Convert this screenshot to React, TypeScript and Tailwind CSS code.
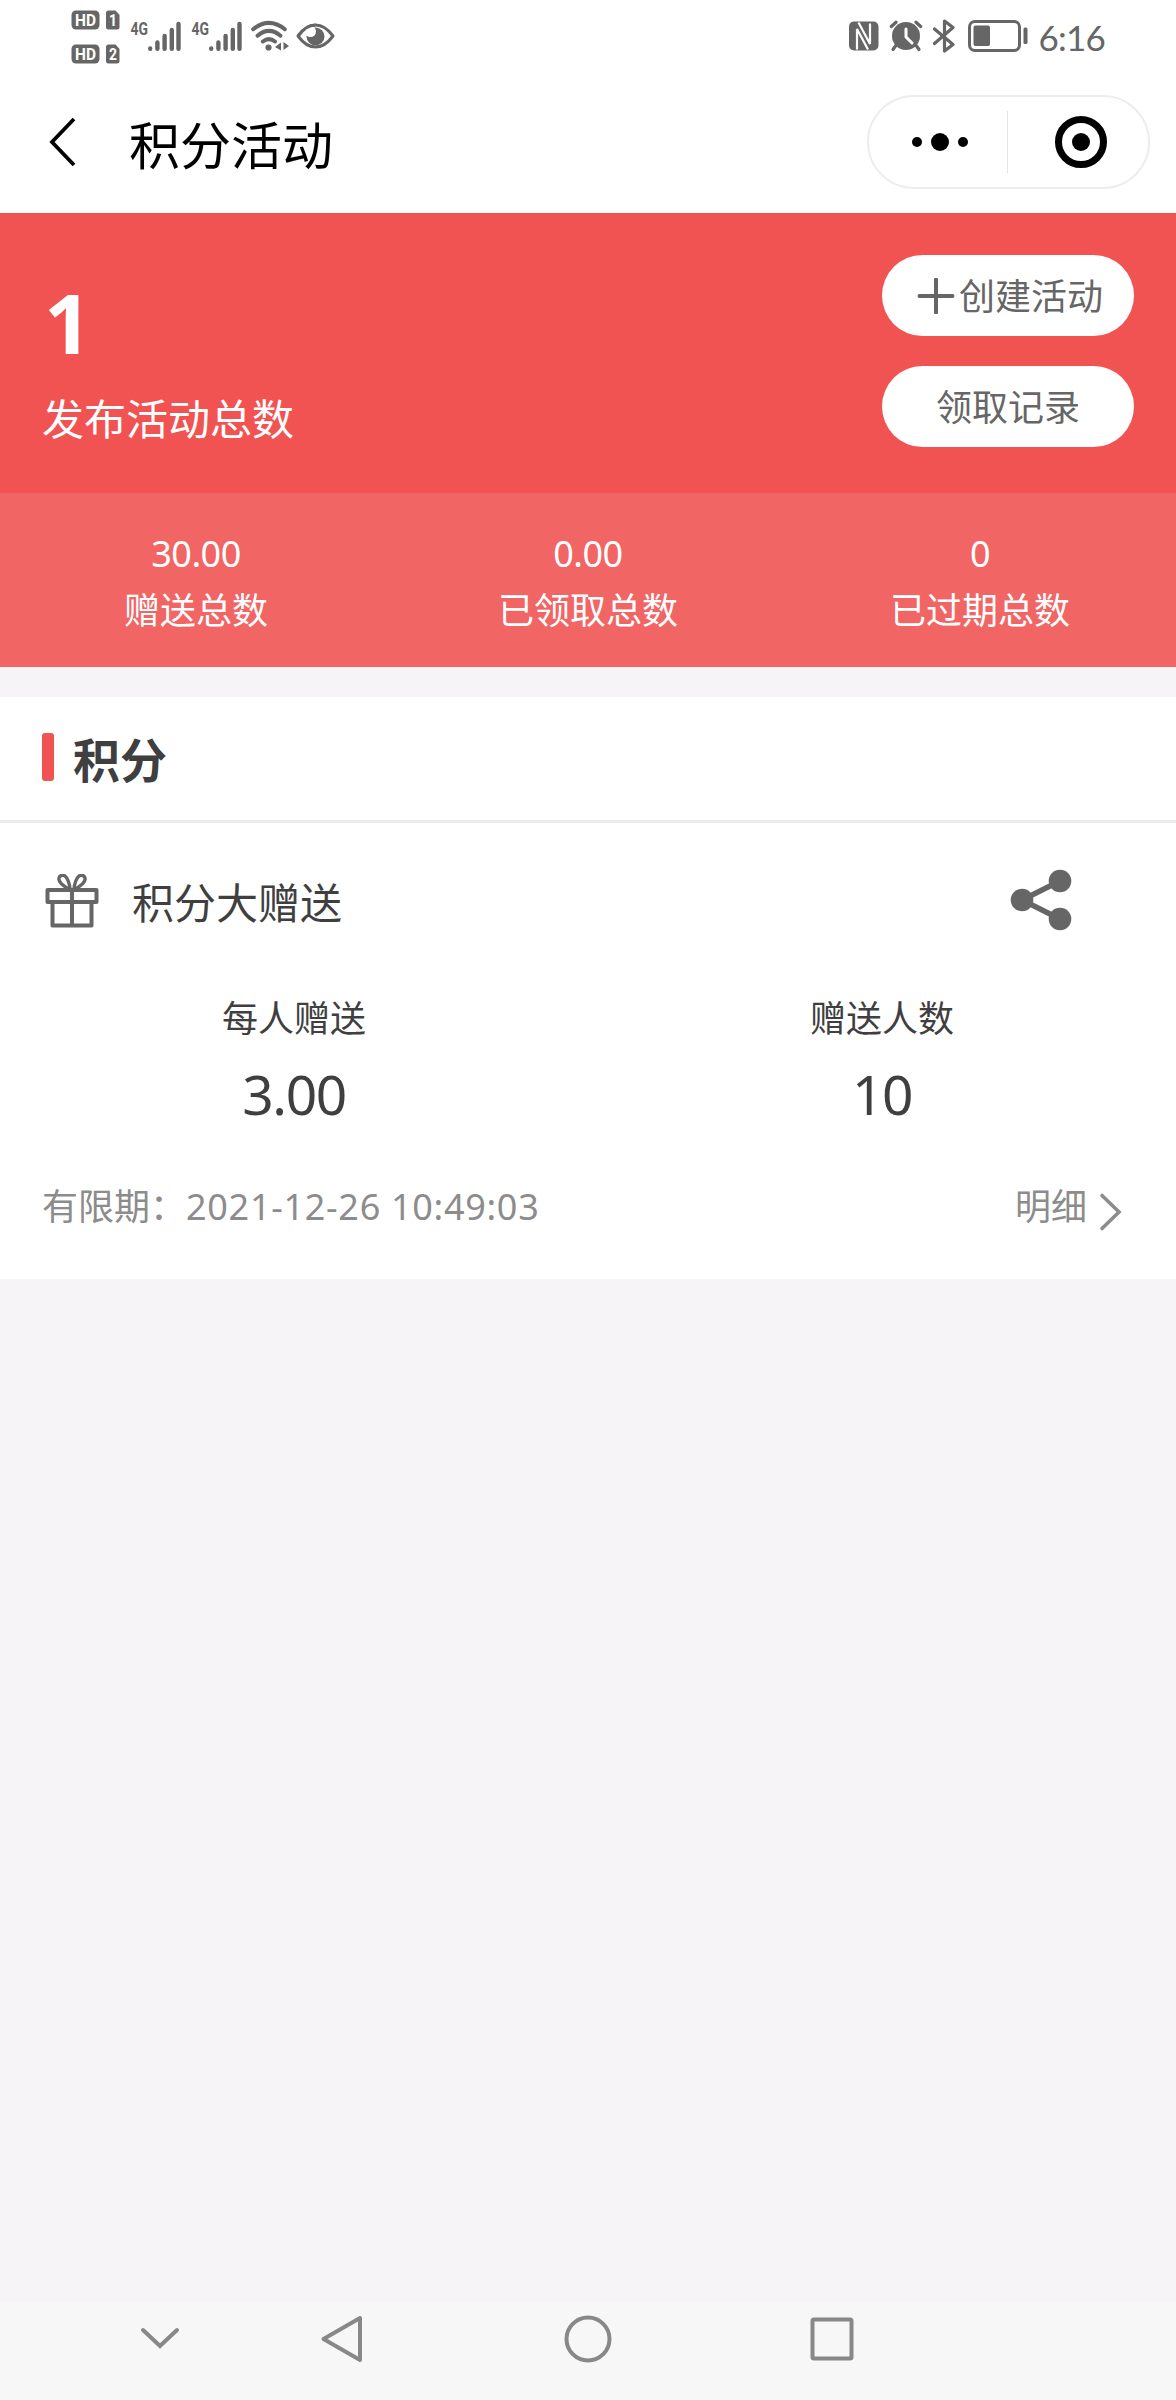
import React from 'react';

const totals = [
  { label: '赠送总数', value: '30.00' },
  { label: '已领取总数', value: '0.00' },
  { label: '已过期总数', value: '0' },
];

const details = [
  { label: '每人赠送', value: '3.00' },
  { label: '赠送人数', value: '10' },
];

// HD badge with the SIM slot number next to it
function HdBadge({ slot }: { slot: number }) {
  return (
    <svg width="49" height="20" viewBox="0 0 49 20" className="block">
      <rect x="0.5" y="0.5" width="28" height="19" rx="4.5" fill="#666" />
      <path d="M38 0.5h6.5l4 4.5v12a2.5 2.5 0 0 1-2.5 2.5h-8.5a2.5 2.5 0 0 1-2.5-2.5V3a2.5 2.5 0 0 1 2.5-2.5z" fill="#666" />
      <text x="4" y="16" textLength="21" lengthAdjust="spacingAndGlyphs" fontSize="17" fontWeight="700" fill="#fff" fontFamily="Roboto, sans-serif">HD</text>
      <text x="38" y="16" textLength="8" lengthAdjust="spacingAndGlyphs" fontSize="16" fontWeight="700" fill="#fff" fontFamily="Roboto, sans-serif">{slot}</text>
    </svg>
  );
}

function Signal() {
  return (
    <svg width="50" height="37" viewBox="0 -5 50 37" className="block overflow-visible">
      <text x="-0.5" y="15" textLength="17.5" lengthAdjust="spacingAndGlyphs" fontSize="19" fontWeight="700" fill="#666" fontFamily="Roboto, sans-serif">4G</text>
      <g stroke="#666" strokeWidth="4.4" strokeLinecap="round">
        <path d="M19.2 28.5v0.3M26.4 22.5v6.3M33.6 16v12.8M40.8 10v18.8M47.5 4v24.8" />
      </g>
    </svg>
  );
}

function WifiIcon() {
  return (
    <svg width="38" height="32" viewBox="0 0 38 32" fill="none" stroke="#666" strokeWidth="4" strokeLinecap="round" className="block">
      <path d="M2.2 9.2Q18 -3.4 33.8 9.2" />
      <path d="M6.5 15.8Q18 6 29.5 15.8" />
      <path d="M11.8 21.5Q18 16.7 24 21.5" />
      <circle cx="17.5" cy="27.5" r="3.1" fill="#666" stroke="none" />
      <path d="M30 22.5v8l-6-3.5zM32.5 22v8l5.5-4z" fill="#666" stroke="none" />
    </svg>
  );
}

function EyeIcon() {
  return (
    <svg width="39" height="26" viewBox="0 0 39 26" fill="none" className="block">
      <path d="M2 13Q10 2 19.5 2T37 13Q29 24 19.5 24T2 13z" stroke="#666" strokeWidth="3" strokeLinejoin="round" />
      <circle cx="19.5" cy="13.5" r="9" fill="#666" />
      <circle cx="14.5" cy="8.5" r="5.5" fill="#fff" />
      <path d="M2 13Q10 2 19.5 2" stroke="#666" strokeWidth="3" />
    </svg>
  );
}

function NfcIcon() {
  return (
    <svg width="30" height="30" viewBox="0 0 30 30" className="block">
      <rect x="0" y="0.5" width="29.5" height="29" rx="5" fill="#666" />
      <path d="M8 28.5V8L19 28.5M9.5 1.5L21 23V2.5" fill="none" stroke="#fff" strokeWidth="2.2" />
    </svg>
  );
}

function AlarmIcon() {
  return (
    <svg width="34" height="32" viewBox="0 0 34 32" fill="none" strokeLinecap="round" className="block">
      <circle cx="17" cy="16" r="14" fill="#666" />
      <path d="M2.3 6.5L7 2.2M31.7 6.5L27 2.2" stroke="#666" strokeWidth="3.2" />
      <path d="M6.5 26l-2.5 3.5M27.5 26l2.5 3.5" stroke="#666" strokeWidth="3.2" />
      <path d="M17 9v8l6 6" stroke="#fff" strokeWidth="3" />
    </svg>
  );
}

function BluetoothIcon() {
  return (
    <svg width="24" height="34" viewBox="0 0 24 34" fill="none" stroke="#666" strokeWidth="3.2" strokeLinecap="round" strokeLinejoin="round" className="block">
      <path d="M2.5 10L21 25.5L12.5 32V2L21 8.5L2.5 24.5" />
    </svg>
  );
}

function BatteryIcon() {
  return (
    <svg width="60" height="32" viewBox="0 0 60 32" className="block">
      <rect x="1.5" y="1.5" width="50" height="29" rx="5.5" fill="none" stroke="#666" strokeWidth="3" />
      <rect x="5.5" y="5.5" width="16.5" height="20.5" rx="2" fill="#666" />
      <rect x="55.5" y="7.5" width="4" height="16.5" rx="1.5" fill="#666" />
    </svg>
  );
}

function StatusBar() {
  return (
    <div className="flex h-[72px] items-start justify-between pr-[71px] pl-[71px]">
      <div className="flex">
        <div className="flex flex-col gap-[14px] pt-[10px]">
          <HdBadge slot={1} />
          <HdBadge slot={2} />
        </div>
        <div className="ml-[11px] flex gap-[11px] pt-[15px]">
          <Signal />
          <Signal />
        </div>
        <div className="ml-[9px] pt-5">
          <WifiIcon />
        </div>
        <div className="ml-[7px] pt-[23px]">
          <EyeIcon />
        </div>
      </div>
      <div className="flex h-[72px] items-center">
        <NfcIcon />
        <div className="ml-[10px]">
          <AlarmIcon />
        </div>
        <div className="ml-[9px]">
          <BluetoothIcon />
        </div>
        <div className="ml-[12px]">
          <BatteryIcon />
        </div>
        <span className="ml-[11px] pt-[3px] font-['Lato',sans-serif] text-[35px] leading-none tracking-[-0.8px] text-[#666]">6:16</span>
      </div>
    </div>
  );
}

function TitleBar() {
  return (
    <div className="flex h-[141px] items-start pt-[23px] pr-[26px] pl-[48px]">
      <svg width="30" height="54" viewBox="0 0 30 54" fill="none" className="mt-5 block">
        <path d="M26 4L4 27L26 50" stroke="#000" strokeWidth="3.8" />
      </svg>
      <h1 className="ml-[51px] pt-[20px] text-[51px] leading-[60px] text-black">积分活动</h1>
      <div className="ml-auto flex h-[94px] w-[283px] items-center rounded-full border-2 border-[#ededed]">
        <div className="flex flex-1 items-center justify-center gap-[9px] pl-[3px]">
          <span className="size-[10px] rounded-full bg-black" />
          <span className="size-[18px] rounded-full bg-black" />
          <span className="size-[10px] rounded-full bg-black" />
        </div>
        <div className="h-[62px] w-px bg-[#e4e4e4]" />
        <div className="flex flex-1 items-center justify-center pl-[5px]">
          <div className="flex size-[52px] items-center justify-center rounded-full border-[7px] border-black">
            <span className="size-[18px] rounded-full bg-black" />
          </div>
        </div>
      </div>
    </div>
  );
}

function Summary() {
  return (
    <div>
      <div className="flex h-[280px] justify-between bg-[#f15353] px-[42px] text-white">
        <div className="pt-[61px]">
          <div className="pl-[2px] text-[83px] leading-[96px] font-bold">1</div>
          <div className="mt-[19px] text-[42px] leading-[60px]">发布活动总数</div>
        </div>
        <div className="flex flex-col gap-[30px] pt-[42px] text-[36px] text-[#666]">
          <button className="flex h-[81px] w-[252px] items-center justify-center rounded-full bg-white pl-[3px]">
            <svg width="43" height="36" viewBox="0 0 43 36" className="block">
              <path d="M3.5 18h33M20 1.5v33" stroke="#666" strokeWidth="4" strokeLinecap="round" />
            </svg>
            <span className="pt-[3px]">创建活动</span>
          </button>
          <button className="flex h-[81px] w-[252px] items-center justify-center rounded-full bg-white pt-[3px]">
            领取记录
          </button>
        </div>
      </div>
      <div className="grid h-[174px] grid-cols-3 bg-[#f16564] pt-[32px] text-center text-[36px] leading-[57px] text-white">
        {totals.map(item => (
          <div key={item.label}>
            <div className="tracking-[-0.5px]">{item.value}</div>
            <div>{item.label}</div>
          </div>
        ))}
      </div>
    </div>
  );
}

function GiftIcon() {
  return (
    <svg width="54" height="54" viewBox="0 0 54 54" fill="none" stroke="#666" strokeWidth="4" strokeLinejoin="round" className="mb-[2px] block">
      <path d="M2.5 16h49v12h-49zM7.5 28v23.5h39V28M27 16v35" />
      <path d="M25 15C18 13 13 7 14 4c1-3.5 5-3.5 7-1 2.5 3 3.5 7 4 12zM29 15c7-2 12-8 11-11-1-3.5-5-3.5-7-1-2.5 3-3.5 7-4 12z" strokeWidth="3.4" />
    </svg>
  );
}

function ActivityCard() {
  return (
    <div className="mt-[30px] h-[582px] bg-white text-[#3f3f3f]">
      <div className="flex h-[126px] items-center border-b-[3px] border-[#ebeaec] pl-[42px]">
        <span className="mb-[4px] h-[48px] w-[12px] rounded-[3px] bg-[#f15353]" />
        <h2 className="ml-[19px] pt-[3px] text-[47px] leading-[60px] font-bold">积分</h2>
      </div>
      <div className="flex items-center pt-[46px] pr-[102px] pl-[45px]">
        <GiftIcon />
        <span className="ml-[33px] pt-px text-[42px] leading-[60px]">积分大赠送</span>
        <svg width="64" height="62" viewBox="0 0 64 62" className="mb-[4px] ml-auto block">
          <path d="M50 12L12 31L50 50" fill="none" stroke="#666" strokeWidth="5.5" />
          <circle cx="12" cy="31" r="11.3" fill="#666" />
          <circle cx="50" cy="12" r="11.3" fill="#666" />
          <circle cx="50" cy="50" r="11.3" fill="#666" />
        </svg>
      </div>
      <div className="mt-[54px] grid grid-cols-2 text-center">
        {details.map(item => (
          <div key={item.label}>
            <div className="text-[36px] leading-[60px]">{item.label}</div>
            <div className="mt-[6px] text-[55px] leading-[78px] tracking-[-1.4px]">{item.value}</div>
          </div>
        ))}
      </div>
      <div className="mt-[44px] flex justify-between pr-[54px] pl-[42px] text-[36px] leading-[60px] text-[#8c8c8c]">
        <div className="flex">
          <span>有限期：</span>
          <span className="tracking-[0.7px]">2021-12-26 10:49:03</span>
        </div>
        <div className="flex items-center">
          明细
          <svg width="24" height="42" viewBox="0 0 24 42" fill="none" className="mt-[10px] ml-[11px] block">
            <path d="M4 4.5L21 21L4 37.5" stroke="#8c8c8c" strokeWidth="3.6" strokeLinecap="round" />
          </svg>
        </div>
      </div>
    </div>
  );
}

function NavBar() {
  return (
    <div className="mt-auto flex h-[97px] items-start bg-[#f8f7f8] pl-[139px]">
      <svg width="42" height="72" viewBox="0 0 42 72" fill="none" stroke="#888" strokeWidth="4" strokeLinecap="round" className="block">
        <path d="M4 27L21 43L38 27" />
      </svg>
      <svg width="48" height="72" viewBox="0 0 48 72" fill="none" stroke="#888" strokeWidth="4" strokeLinejoin="round" className="ml-[136px] block">
        <path d="M43 15V57L6.5 36z" />
      </svg>
      <svg width="48" height="72" viewBox="0 0 48 72" fill="none" stroke="#888" strokeWidth="4" className="ml-[199px] block">
        <circle cx="24" cy="36" r="21.5" />
      </svg>
      <svg width="48" height="72" viewBox="0 0 48 72" fill="none" stroke="#888" strokeWidth="4" className="ml-[196px] block">
        <rect x="4.5" y="16.5" width="39" height="39" rx="1.5" />
      </svg>
    </div>
  );
}

/**
 * Points Activity Page
 *
 * Shows the merchant's published activities with totals and a card per activity.
 */
export default function App() {
  return (
    <div className="flex h-[2400px] w-[1176px] flex-col bg-[#f6f4f7] font-['Noto_Sans','Noto_Sans_CJK_SC',sans-serif]">
      {/* Header */}
      <div className="bg-white">
        <StatusBar />
        <TitleBar />
      </div>

      {/* Main Content */}
      <Summary />
      <ActivityCard />

      {/* System navigation */}
      <NavBar />
    </div>
  );
}
